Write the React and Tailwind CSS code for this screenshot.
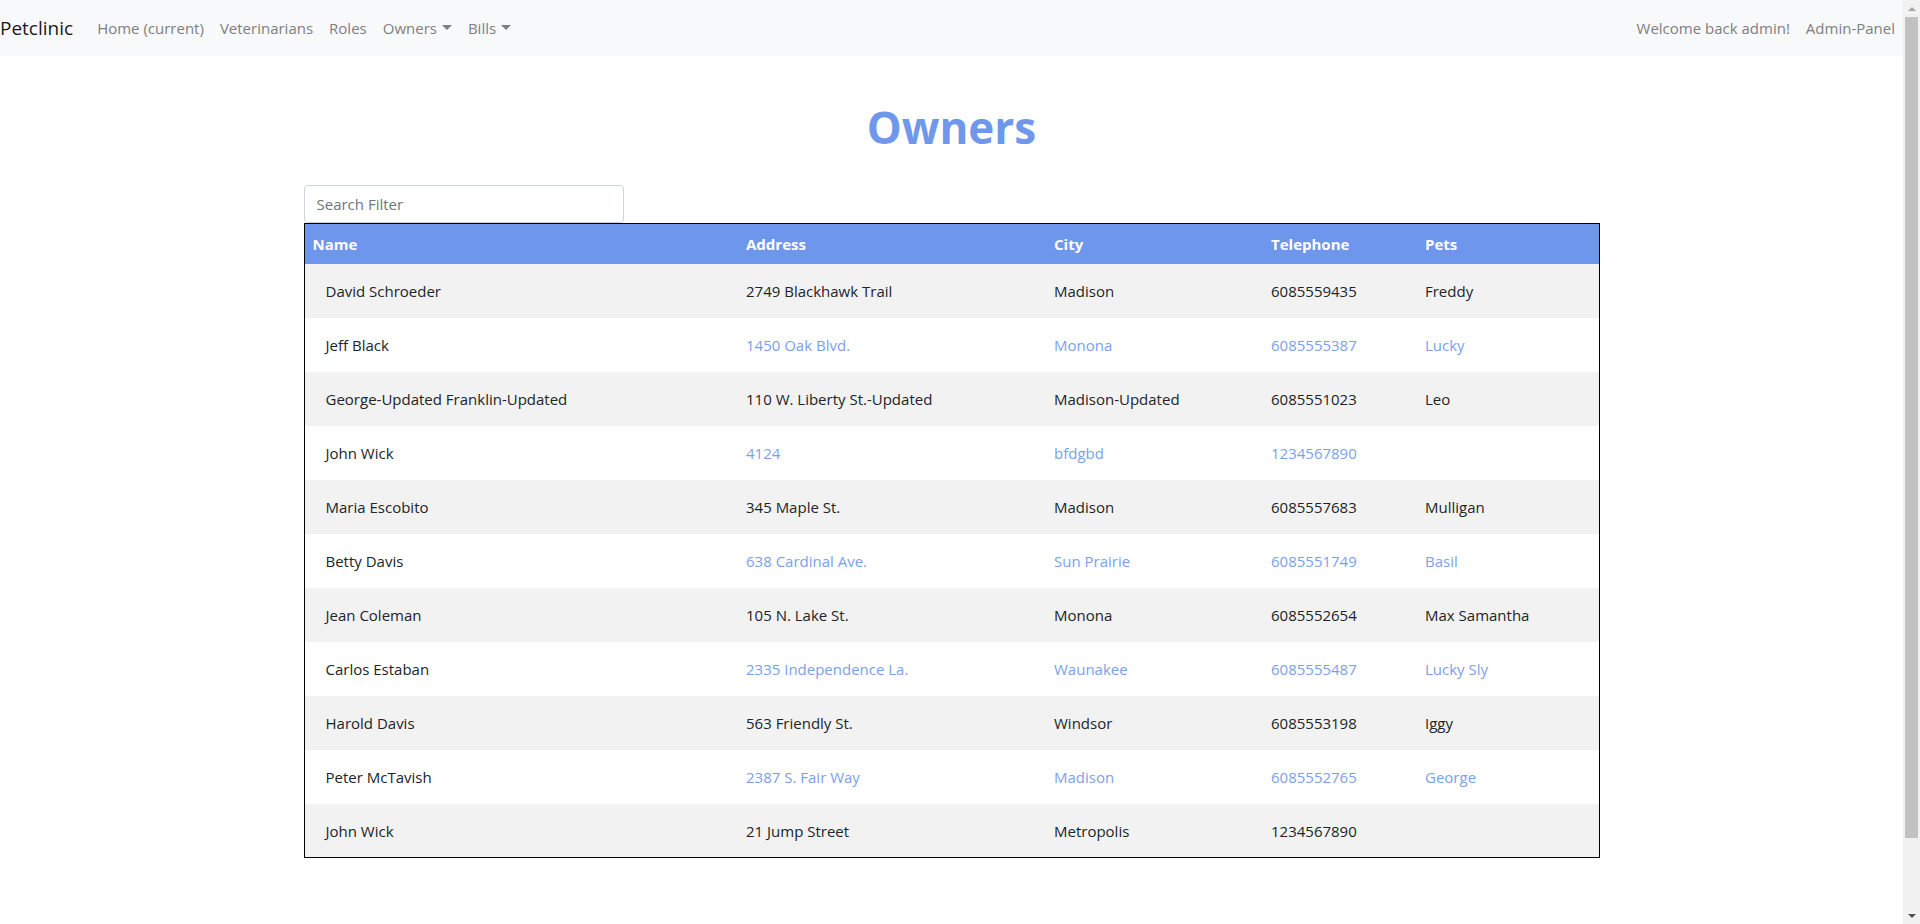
import React from "react";

const rows = [
  ["David Schroeder", "2749 Blackhawk Trail", "Madison", "6085559435", "Freddy"],
  ["Jeff Black", "1450 Oak Blvd.", "Monona", "6085555387", "Lucky"],
  ["George-Updated Franklin-Updated", "110 W. Liberty St.-Updated", "Madison-Updated", "6085551023", "Leo"],
  ["John Wick", "4124", "bfdgbd", "1234567890", ""],
  ["Maria Escobito", "345 Maple St.", "Madison", "6085557683", "Mulligan"],
  ["Betty Davis", "638 Cardinal Ave.", "Sun Prairie", "6085551749", "Basil"],
  ["Jean Coleman", "105 N. Lake St.", "Monona", "6085552654", "Max Samantha"],
  ["Carlos Estaban", "2335 Independence La.", "Waunakee", "6085555487", "Lucky Sly"],
  ["Harold Davis", "563 Friendly St.", "Windsor", "6085553198", "Iggy"],
  ["Peter McTavish", "2387 S. Fair Way", "Madison", "6085552765", "George"],
  ["John Wick", "21 Jump Street", "Metropolis", "1234567890", ""],
];

function Caret() {
  return (
    <span className="ml-[5px] inline-block w-0 h-0 border-l-[5px] border-r-[5px] border-t-[5px] border-l-transparent border-r-transparent border-t-[#7f7f7f] align-middle relative top-[-1px]" />
  );
}

function Scrollbar() {
  return (
    <div className="w-[17px] h-[924px] bg-[#f1f1f1] flex flex-col items-center shrink-0">
      <div className="h-[17px] w-full flex items-center justify-center">
        <span className="inline-block w-0 h-0 border-l-[4px] border-r-[4px] border-b-[4px] border-l-transparent border-r-transparent border-b-[#a3a3a3]" />
      </div>
      <div className="w-[13px] h-[821px] bg-[#c1c1c1]" />
      <div className="flex-1" />
      <div className="h-[17px] w-full flex items-center justify-center">
        <span className="inline-block w-0 h-0 border-l-[4px] border-r-[4px] border-t-[4px] border-l-transparent border-r-transparent border-t-[#505050]" />
      </div>
    </div>
  );
}

export default function App() {
  return (
    <div className="flex w-[1920px] h-[924px] overflow-hidden bg-white" style={{ fontFamily: "'Open Sans', 'Noto Sans', sans-serif" }}>
      <div className="flex-1 h-[924px] overflow-hidden text-[#212529]">
        <nav className="h-[56px] bg-[#f8f9fa] flex items-center justify-between">
          <div className="flex items-center">
            <span className="text-[19px] text-[#1a1a1a] mr-[16px] leading-none">Petclinic</span>
            <div className="flex items-center text-[15px] text-[#7f7f7f]">
              <span className="px-2">Home (current)</span>
              <span className="px-2">Veterinarians</span>
              <span className="px-2">Roles</span>
              <span className="px-2 flex items-center">Owners<Caret /></span>
              <span className="px-2 flex items-center">Bills<Caret /></span>
            </div>
          </div>
          <div className="flex items-center text-[15px] text-[#7f7f7f]">
            <span className="px-2">Welcome back admin!</span>
            <span className="px-2">Admin-Panel</span>
          </div>
        </nav>

        <h1 className="mt-[45px] text-center text-[44px] leading-[52px] font-bold text-[#6f97eb]">Owners</h1>

        <div className="w-[1296px] mx-auto mt-[32px]">
          <input
            type="text"
            placeholder="Search Filter"
            className="block w-[320px] h-[38px] px-3 text-[15px] border border-[#ced4da] rounded-[4px] placeholder:text-[#6c757d] outline-none"
          />
          <table className="w-full table-fixed border-collapse border border-black text-[15px]">
            <colgroup>
              <col className="w-[434px]" />
              <col className="w-[308px]" />
              <col className="w-[217px]" />
              <col className="w-[154px]" />
              <col />
            </colgroup>
            <thead>
              <tr className="h-[40px] bg-[#6e96ec] text-white text-left">
                <th className="px-2 font-bold">Name</th>
                <th className="px-2 font-bold">Address</th>
                <th className="px-2 font-bold">City</th>
                <th className="px-2 font-bold">Telephone</th>
                <th className="px-2 font-bold">Pets</th>
              </tr>
            </thead>
            <tbody>
              {rows.map((r, i) => {
                const odd = i % 2 === 0;
                const c = odd ? "text-[#212529]" : "text-[#7c9fec]";
                return (
                  <tr key={i} className={`h-[54px] ${odd ? "bg-[#f2f2f2]" : "bg-white"}`}>
                    <td className="pl-[21px] pr-2 pt-[2px] text-[#212529]">{r[0]}</td>
                    <td className={`px-2 pt-[2px] ${c}`}>{r[1]}</td>
                    <td className={`px-2 pt-[2px] ${c}`}>{r[2]}</td>
                    <td className={`px-2 pt-[2px] ${c}`}>{r[3]}</td>
                    <td className={`px-2 pt-[2px] ${c}`}>{r[4]}</td>
                  </tr>
                );
              })}
            </tbody>
          </table>
        </div>
      </div>
      <Scrollbar />
    </div>
  );
}
